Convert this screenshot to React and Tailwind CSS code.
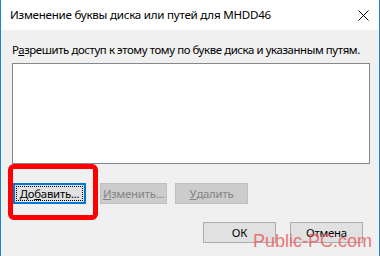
import React from "react";

function Btn({ children, disabled, className = "" }) {
    return (
        <div
            className={`flex h-[21px] items-center justify-center border ${
                disabled ? "border-[#bfbfbf] bg-[#cccccc] text-[#838383]" : "border-[#adadad] bg-[#e1e1e1] text-black"
            } ${className}`}
        >
            {children}
        </div>
    );
}

export default function App() {
    return (
        <div
            className="relative flex h-[256px] w-[380px] flex-col overflow-hidden whitespace-nowrap border-x border-[#1883d7] bg-[#f0f0f0] text-[11.4px] leading-4 tracking-[-0.25px] text-black"
            style={{ fontFamily: '"Noto Sans", "Open Sans", sans-serif' }}
        >
            <div className="flex h-[30px] items-center justify-between bg-white pl-[9px] pr-[9px]">
                <span className="text-[11.6px]">Изменение буквы диска или путей для MHDD46</span>
                <svg width="11" height="11" viewBox="0 0 11 11" className="mr-[1px]">
                    <path d="M0.5 0.5 L10.5 10.5 M10.5 0.5 L0.5 10.5" stroke="#000" strokeWidth="1" />
                </svg>
            </div>

            <div className="flex flex-1 flex-col">
                <p className="ml-[11px] mt-[12px] tracking-[-0.4px]">
                    Р<u>а</u>зрешить доступ к этому тому по букве диска и указанным путям.
                </p>
                <div className="ml-[11px] mr-[9px] mt-[5px] h-[101px] border border-[#828790] bg-white" />

                <div className="mt-[19px] flex items-center">
                    <div className="ml-[12px] h-[21px] w-[73px] border-2 border-[#0078d7] bg-[#e1e1e1] p-[1px]">
                        <div className="flex h-full items-center justify-center border border-dotted border-black">
                            До<u>б</u>авить...
                        </div>
                    </div>
                    <Btn disabled className="ml-[14px] w-[67px]">
                        <u>И</u>зменить...
                    </Btn>
                    <Btn disabled className="ml-[8px] w-[73px]">
                        <u>У</u>далить
                    </Btn>
                </div>

                <div className="mt-[18px] flex items-center">
                    <Btn className="ml-[202px] w-[73px]">ОК</Btn>
                    <Btn className="ml-[14px] w-[73px]">Отмена</Btn>
                </div>
            </div>

            <div className="absolute left-[7px] top-[164px] h-[56px] w-[90px] rounded-[6px] border-[5px] border-[#ff0000]" />

            <div
                className="absolute left-[252px] top-[230px] text-[18px] leading-[22px] tracking-normal text-[#e85a5a] opacity-80"
                style={{ fontFamily: '"Liberation Sans", Arial, sans-serif' }}
            >
                Public-PC.com
            </div>
        </div>
    );
}
